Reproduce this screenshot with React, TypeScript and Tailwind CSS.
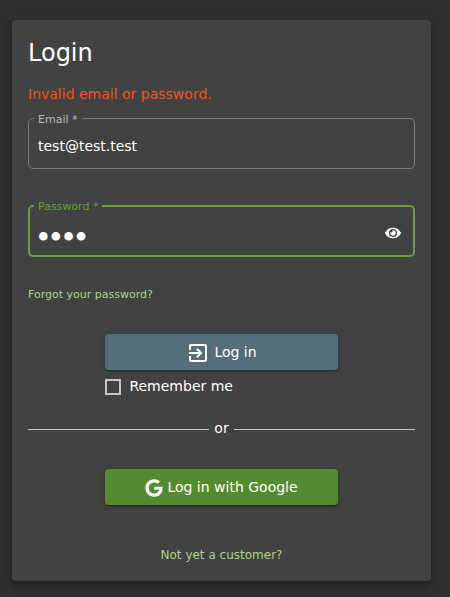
import { useState } from "react";

const buttonBase =
  "flex h-9 w-full cursor-pointer items-center justify-center gap-1 rounded text-sm text-white shadow-[0_3px_1px_-2px_rgba(0,0,0,0.2),0_2px_2px_0_rgba(0,0,0,0.14),0_1px_5px_0_rgba(0,0,0,0.12)]";

function EyeIcon() {
  return (
    <svg viewBox="0 0 576 512" className="h-4 w-4" fill="currentColor" aria-hidden="true">
      <path d="M572.52 241.4C518.29 135.59 410.93 64 288 64S57.68 135.64 3.48 241.41a32.35 32.35 0 0 0 0 29.19C57.71 376.41 165.07 448 288 448s230.32-71.64 284.52-177.41a32.35 32.35 0 0 0 0-29.19zM288 400a144 144 0 1 1 144-144 143.93 143.93 0 0 1-144 144zm0-240a95.31 95.31 0 0 0-25.31 3.79 47.85 47.85 0 0 1-66.9 66.9A95.78 95.78 0 1 0 288 160z" />
    </svg>
  );
}

function EnterIcon() {
  return (
    <svg viewBox="0 0 24 24" className="mt-0.5 h-6 w-6" fill="currentColor" aria-hidden="true">
      <path d="M10.09 15.59L11.5 17l5-5-5-5-1.41 1.41L12.67 11H3v2h9.67l-2.58 2.59zM19 3H5c-1.11 0-2 .9-2 2v4h2V5h14v14H5v-4H3v4c0 1.1.89 2 2 2h14c1.1 0 2-.9 2-2V5c0-1.1-.9-2-2-2z" />
    </svg>
  );
}

function GoogleIcon() {
  return (
    <svg viewBox="0 0 488 512" className="mt-0.5 h-[18px] w-[18px]" fill="currentColor" aria-hidden="true">
      <path d="M488 261.8C488 403.3 391.1 504 248 504 110.8 504 0 393.2 0 256S110.8 8 248 8c66.8 0 123 24.5 166.3 64.9l-67.5 64.9C258.5 52.6 94.3 116.6 94.3 256c0 86.5 69.1 156.6 153.7 156.6 98.2 0 135-70.4 140.8-106.9H248v-85.3h236.1c2.3 12.7 3.9 24.9 3.9 41.4z" />
    </svg>
  );
}

export default function App() {
  const [email, setEmail] = useState("test@test.test");
  const [password, setPassword] = useState("test");
  const [visible, setVisible] = useState(false);

  return (
    <div className="min-h-screen bg-[#303030] pt-5 pr-[19px] pb-4 pl-3 font-['DejaVu_Sans',sans-serif] text-sm text-white">
      <main className="rounded bg-[#424242] px-4 pt-[17px] pb-4 shadow-[0_3px_5px_-1px_rgba(0,0,0,0.2),0_6px_10px_0_rgba(0,0,0,0.14),0_1px_18px_0_rgba(0,0,0,0.12)]">
        <h1 className="text-2xl leading-8">Login</h1>
        <form onSubmit={(event) => event.preventDefault()}>
          <p className="mt-[15px] leading-5 text-[#f4511e]" role="alert">
            Invalid email or password.
          </p>

          <fieldset className="mt-[5px] min-w-0 rounded-[5px] border border-[#7b7b7b] pl-[5px]">
            <legend className="px-1 pt-1 text-[11px] leading-[14px] text-[#b9b9b9]">
              <label htmlFor="email">Email *</label>
            </legend>
            <input
              id="email"
              type="email"
              value={email}
              onChange={(event) => setEmail(event.target.value)}
              className="block h-[41px] w-full bg-transparent pb-1 pl-1 text-sm outline-none"
            />
          </fieldset>

          <fieldset className="mt-[29px] min-w-0 rounded-[5px] border-2 border-[#689f38] pl-1">
            <legend className="px-1 pt-0.5 text-[11px] leading-[14px] text-[#689f38]">
              <label htmlFor="password">Password *</label>
            </legend>
            <div className="flex h-[41px] items-center pr-3">
              <input
                id="password"
                type={visible ? "text" : "password"}
                value={password}
                onChange={(event) => setPassword(event.target.value)}
                className={
                  visible
                    ? "h-10 min-w-0 flex-1 bg-transparent pl-1 text-sm outline-none"
                    : "h-10 min-w-0 flex-1 bg-transparent pt-1 pl-[3px] font-['Liberation_Serif',serif] text-4xl leading-none outline-none"
                }
              />
              <button
                type="button"
                aria-label="Show password"
                onClick={() => setVisible(!visible)}
                className="cursor-pointer pb-1"
              >
                <EyeIcon />
              </button>
            </div>
          </fieldset>

          <a href="#forgot" className="mt-[30px] block w-fit text-[11px] leading-4 text-[#aed581]">
            Forgot your password?
          </a>

          <div className="mx-auto mt-[31px] w-3/5">
            <button type="submit" className={`${buttonBase} bg-[#546e7a]`}>
              <EnterIcon />
              Log in
            </button>
            <label className="mt-1.5 flex w-fit items-center gap-2 leading-5">
              <input
                type="checkbox"
                className="mt-0.5 h-4 w-4 appearance-none border-2 border-[#c6c6c6] checked:bg-[#689f38]"
              />
              Remember me
            </label>
          </div>

          <div className="mt-[22px] flex items-center gap-[5px] leading-5">
            <span className="mt-0.5 h-px flex-1 bg-[#c6c6c6]" />
            or
            <span className="mt-0.5 h-px flex-1 bg-[#c6c6c6]" />
          </div>

          <div className="mx-auto mt-[31px] w-3/5">
            <button type="button" className={`${buttonBase} bg-[#558b2f]`}>
              <GoogleIcon />
              Log in with Google
            </button>
          </div>
        </form>

        <a href="#register" className="mx-auto mt-10 block w-fit text-xs leading-5 text-[#aed581]">
          Not yet a customer?
        </a>
      </main>
    </div>
  );
}
